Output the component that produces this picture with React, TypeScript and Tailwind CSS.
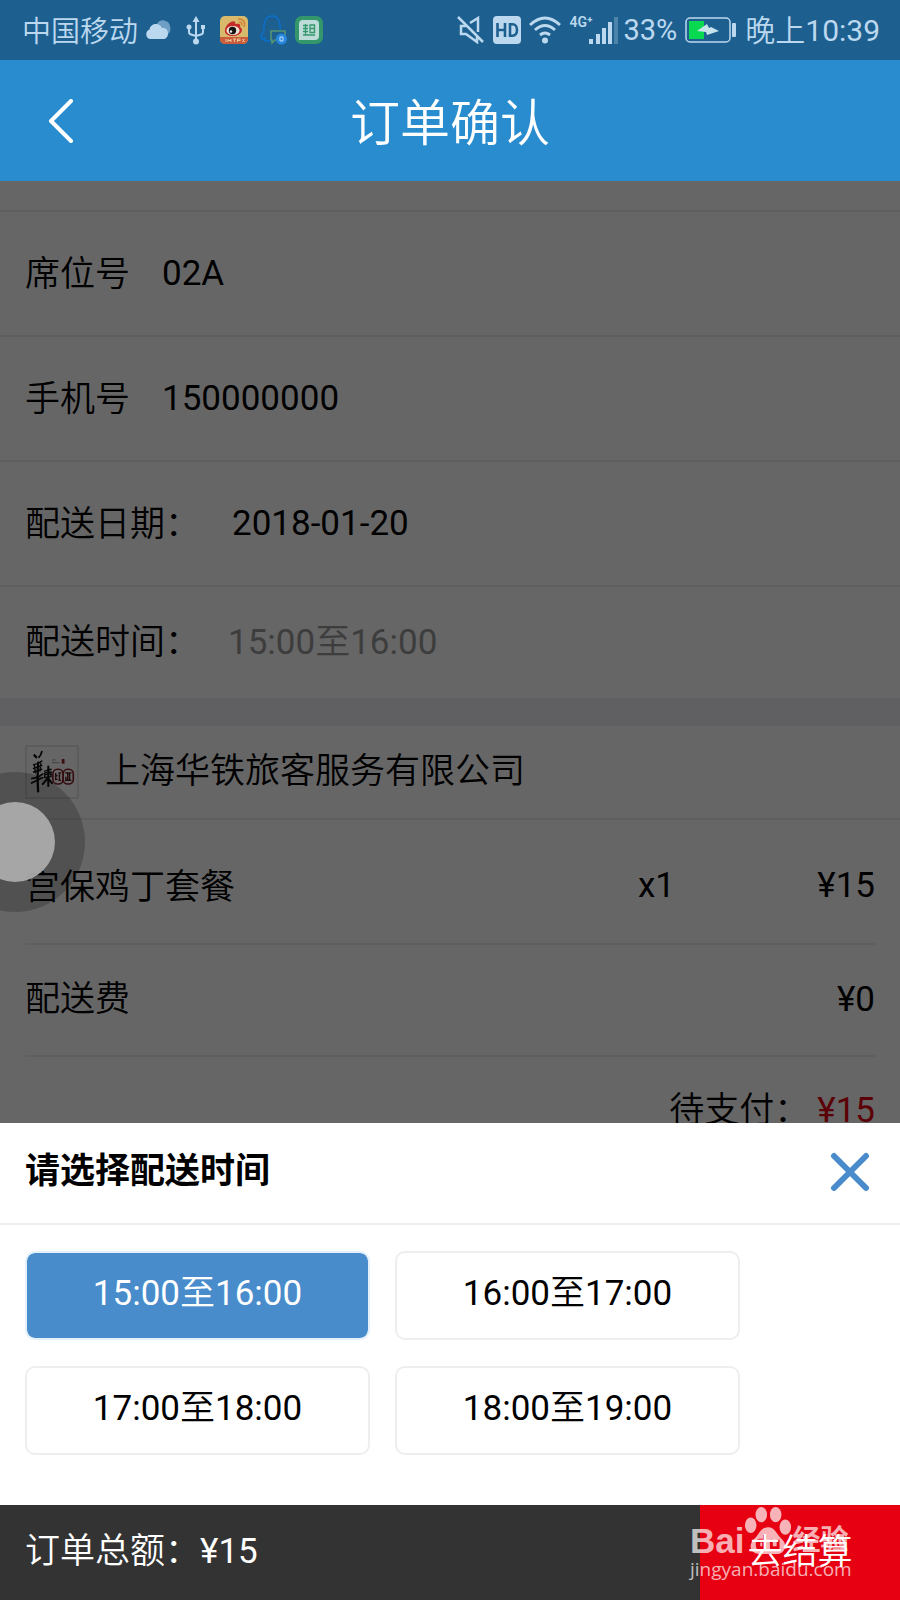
import { useState } from "react";
import type { ReactNode } from "react";

const TIMES = ["15:00至16:00", "16:00至17:00", "17:00至18:00", "18:00至19:00"];

function StatusBar() {
  return (
    <div className="flex h-[60px] shrink-0 items-center justify-between bg-[#1d6090] pl-[22px] pr-5 text-[#bcd8ef]">
      <div className="flex items-center">
        <span className="pt-1 text-[29px] font-[350] leading-10">中国移动</span>
        <svg className="ml-[7px] h-5 w-[26px]" viewBox="0 0 26 20" aria-hidden="true">
          <path d="M12 4a7 7 0 0 1 13 2c1 4 0 7-2 8L12 6Z" fill="#6f9fc4" />
          <path d="M5 19a5 5 0 0 1-.5-9.500C5.500 3 14.500 2 17 8c4-.5 6 2 6 5.500S21 19 18 19Z" fill="#bcd8ef" />
        </svg>
        <svg className="ml-[15px] h-[29px] w-5" viewBox="0 0 20 29" fill="none" stroke="currentColor" strokeWidth="2" aria-hidden="true">
          <path d="M10 5v19M3 12v4q0 2 2 2.500l5 1.500M17 12v4q0 2-2 2.500l-5 1.500" />
          <path d="m10 0 3.500 6h-7ZM15 9h4v4h-4Z" fill="currentColor" stroke="none" />
          <circle cx="3" cy="11" r="2.500" fill="currentColor" stroke="none" />
          <circle cx="10" cy="25.500" r="3" fill="currentColor" stroke="none" />
        </svg>
        <svg className="ml-[14px] size-7" viewBox="0 0 28 28" aria-hidden="true">
          <rect width="28" height="28" rx="5" fill="#d9b96c" />
          <path d="M0 21h28v2a5 5 0 0 1-5 5H5a5 5 0 0 1-5-5Z" fill="#cc5b3c" />
          <path d="M6 23v3m2 0v-3m0 1.500h3m0-1.500v3m2-3h3m-1.500 0v3m3-3v3m0-3h3m-3 1.500h3m2-1.500 2 3m0-3-2 3" fill="none" stroke="#e8c99a" strokeWidth="1" />
          <path d="M5 14C5 9 13 3 15 6c.8 1-.2 2 .5 2 5-1 5 1 4.500 3 4 2 2 8-6 9C9 20.500 4 18 5 14Z" fill="#c52d2b" />
          <ellipse cx="13" cy="14.500" rx="6.500" ry="4.500" fill="#eee5d7" />
          <circle cx="12.500" cy="14.500" r="3.700" fill="#151313" />
          <circle cx="11" cy="15.500" r="1.200" fill="#eee" />
          <path d="M18 3c5-.5 8 3 6 8M19 6c2 0 3.500 1 2.700 3.500" fill="none" stroke="#cf8336" strokeWidth="1.500" />
        </svg>
        <svg className="ml-3 h-[30px] w-[27px]" viewBox="0 0 27 30" fill="none" aria-hidden="true">
          <path d="M12 26H6c-2 0-2-1.500-1-3-2-1-2 1-3 1-2-1 0-6 2-8C3 7 6 1 12 1s9 6 8 14" stroke="#0b70ca" strokeWidth="1.500" />
          <path d="M11 16h14v9H15l-3 3v-3h-1Z" stroke="#589473" strokeWidth="1.500" />
          <circle cx="21.500" cy="24" r="5.500" fill="#2685dc" />
          <path d="M20 22h3v4h-3Z" stroke="#c1e2fa" />
        </svg>
        <svg className="ml-2 size-7" viewBox="0 0 28 28" aria-hidden="true">
          <rect width="28" height="28" rx="7" fill="#33976b" />
          <path d="M8 4h12a4 4 0 0 1 4 4v12a4 4 0 0 1-4 4H4V8a4 4 0 0 1 4-4Z" fill="#bddbd8" />
          <path d="M8 9.500h5M8 12.500h5M8 15.500h5M8 19h12M10.500 8v11M15 9h4.500v7.500H15ZM15 12.500h4.500" fill="none" stroke="#33976b" strokeWidth="1.300" />
        </svg>
      </div>
      <div className="flex items-center">
        <svg className="h-7 w-[28px]" viewBox="0 0 28 28" fill="none" stroke="currentColor" strokeWidth="2.500" aria-hidden="true">
          <path d="m1 1 25 25M9 10H4v8h5l11 8v-5M13 7l8-5v14" />
        </svg>
        <svg className="ml-2 h-7 w-[28px]" viewBox="0 0 28 28" aria-hidden="true">
          <rect width="28" height="28" rx="4" fill="currentColor" />
          <path d="M4.500 7v14M12 7v14M4 14h8M17 8.300h2.500c6 0 6 11.400 0 11.400H17Z" fill="none" stroke="#1d6090" strokeWidth="2.600" />
        </svg>
        <svg className="ml-2 h-7 w-[32px]" viewBox="0 0 32 28" fill="none" stroke="currentColor" strokeWidth="3" aria-hidden="true">
          <path d="M1 9q15-14 30 0M6 14q10-9 20 0M11 19q5-4 10 0" />
          <circle cx="16" cy="24.500" r="3" fill="currentColor" stroke="none" />
        </svg>
        <div className="ml-2 flex h-[28px]">
          <span className="w-5 text-[14px] font-semibold leading-3">4G⁺</span>
          <svg className="h-[28px] w-[30px]" viewBox="0 0 30 28" fill="currentColor" aria-hidden="true">
            <path d="M0 23h4v5H0ZM7 18h4v10H7ZM13 12h4v16h-4ZM19 6h4v22h-4Z" />
            <path d="M25 1h4v27h-4Z" opacity=".3" />
          </svg>
        </div>
        <span className="ml-1 text-[29px] leading-10">33%</span>
        <svg className="ml-2 h-[26px] w-[52px]" viewBox="0 0 52 26" aria-hidden="true">
          <rect x="1" y="1" width="44" height="24" rx="4" fill="none" stroke="currentColor" strokeWidth="1.500" />
          <path d="M4 4h15v18H4Z" fill="#09d950" />
          <path d="m12 14 10-7 2 4 2-1 8 4-12 4-1-3Z" fill="#c7e4ed" />
          <rect x="47" y="6" width="4" height="14" rx="1" fill="currentColor" />
        </svg>
        <span className="ml-2 pt-[2px] text-[30px] font-[350] leading-10">晚上<span className="font-normal">10:39</span></span>
      </div>
    </div>
  );
}

function Row({ label, children }: { label: string; children: ReactNode }) {
  return (
    <div className="flex h-[125px] items-center gap-8 border-b-2 border-[#eeeeee] px-[25px]">
      <dt className="pt-[2px] font-[350]">{label}</dt>
      <dd>{children}</dd>
    </div>
  );
}

function StoreLogo() {
  return (
    <svg className="size-[54px] shrink-0 border-2 border-[#e6e6e6]" viewBox="0 0 54 54" fill="none" aria-hidden="true">
      <g stroke="#111" strokeLinecap="round">
        <path d="m8 9 2 2" strokeWidth="2.500" />
        <path d="M16 5q-1 4-3 6" strokeWidth="2" />
        <path d="M7 19q6-1 9-4M8 20l1 8m6-10-1 8m-7-3 9-3m-9 7 9-3" strokeWidth="1.500" />
        <path d="M5 34q8-1 12-5M5 39l12-6" strokeWidth="1.800" />
        <path d="M12 17q-1 14 0 31" strokeWidth="2.500" />
        <path d="m19 26 7-2m-7 4v5m0-5 7-1v5l-7 1m0-3 7-1" strokeWidth="1.500" />
        <path d="M23 21v21m-1-8-5 6m6-6 4 5" strokeWidth="2.200" />
      </g>
      <path d="M27 14h4m-4 3h8" stroke="#999" />
      <path d="M39 13v5" stroke="#8d2525" strokeWidth="3" />
      <g stroke="#852129" strokeWidth="1.800">
        <rect x="28" y="24" width="11" height="16" rx="5" />
        <rect x="39" y="24" width="11" height="16" rx="5" />
        <path d="M31 28v8m0-5h2m-2 4h2m2-7v8m-1-8h3m-3 8h3" stroke="#541419" strokeWidth="1.500" />
        <path d="M41 28h7m-4 0v8m-2-4v4m4-8v8m-5 0h7" stroke="#541419" strokeWidth="1.500" />
      </g>
    </svg>
  );
}

function OrderDetails() {
  return (
    <main className="relative min-h-0 flex-1 overflow-hidden bg-white">
      <div className="h-[31px] border-b-2 border-[#eeeeee]" />
      <dl>
        <Row label="席位号">02A</Row>
        <Row label="手机号">150000000</Row>
        <Row label="配送日期：">2018-01-20</Row>
        <div className="flex h-[111px] items-center gap-7 px-[25px]">
          <dt className="font-[350]">配送时间：</dt>
          <dd className="text-[#999999]">15:00<span className="font-[350]">至</span>16:00</dd>
        </div>
      </dl>
      <div className="h-7 bg-[#efeff4]" />
      <section>
        <div className="flex h-[94px] items-center gap-[26px] border-b-2 border-[#eeeeee] px-[25px]">
          <StoreLogo />
          <h2 className="font-[350]">上海华铁旅客服务有限公司</h2>
        </div>
        <div className="px-[25px]">
          <div className="flex h-[125px] items-center border-b-2 border-[#eeeeee] pt-2">
            <span className="flex-1 pt-1 font-[350]">宫保鸡丁套餐</span>
            <span>x1</span>
            <span className="w-[200px] text-right">¥15</span>
          </div>
          <div className="flex h-[112px] items-center justify-between border-b-2 border-[#eeeeee]">
            <span className="font-[350]">配送费</span>
            <span>¥0</span>
          </div>
          <div className="flex h-[108px] items-center justify-end">
            <span className="font-[350]">待支付：</span>
            <span className="ml-2 text-[#e60012]">¥15</span>
          </div>
        </div>
      </section>
      <div className="absolute inset-0 bg-black/60" />
      <button
        type="button"
        aria-label="悬浮按钮"
        className="absolute -left-[55px] top-[591px] flex size-[140px] items-center justify-center rounded-full bg-black/20"
      >
        <span className="size-20 rounded-full bg-[#ababab]/95" />
      </button>
    </main>
  );
}

function TimeSheet() {
  const [selected, setSelected] = useState(TIMES[0]);
  return (
    <section className="shrink-0 bg-white" aria-labelledby="sheet-title">
      <div className="flex h-[102px] items-center justify-between border-b-2 border-[#eeeeee] pb-[2px] pl-[25px] pr-[30px]">
        <h2 id="sheet-title" className="font-bold">请选择配送时间</h2>
        <button type="button" aria-label="关闭">
          <svg className="size-10" viewBox="0 0 40 40" fill="none" stroke="#4a8ccb" strokeWidth="6" strokeLinecap="round" aria-hidden="true">
            <path d="m4 4 32 32M36 4 4 36" />
          </svg>
        </button>
      </div>
      <div className="grid w-full max-w-[740px] grid-cols-2 gap-x-[25px] gap-y-[26px] pb-[50px] pl-[25px] pt-[26px]">
        {TIMES.map((time) => (
          <button
            key={time}
            type="button"
            aria-pressed={selected === time}
            onClick={() => setSelected(time)}
            className={`h-[89px] rounded-[10px] border-2 pb-1 ${
              selected === time ? "border-[#e4f1fa] bg-[#488ccb] bg-clip-padding text-white" : "border-[#eeeeee] bg-white text-black"
            }`}
          >
            {time.slice(0, 5)}<span className="font-[350]">至</span>{time.slice(6)}
          </button>
        ))}
      </div>
    </section>
  );
}

function Watermark() {
  return (
    <div className="pointer-events-none absolute -left-[10px] top-0 w-[170px] text-white/70">
      <div className="flex items-end">
        <span className="font-['Liberation_Sans'] text-[35px] font-bold leading-8">Bai</span>
        <svg className="h-[52px] w-[48px]" viewBox="0 0 50 50" fill="currentColor" aria-hidden="true">
          <ellipse cx="7" cy="19" rx="6" ry="8" />
          <ellipse cx="18" cy="8" rx="6" ry="8" />
          <ellipse cx="33" cy="8" rx="6" ry="8" />
          <ellipse cx="43" cy="21" rx="6" ry="8" />
          <path
            fillRule="evenodd"
            d="M25 21c8 0 9 8 15 13 6 6 2 15-6 15H16c-9 0-12-9-6-15 6-5 7-13 15-13ZM20 33h-4c-5 0-5 12 0 12h7V29h-3ZM19 37v4h-2v-4ZM27 34v8q0 3 3 3h7V34h-3v7h-4v-7Z"
          />
        </svg>
        <span className="text-[28px] font-bold leading-8">经验</span>
      </div>
      <div className="font-['Open_Sans'] text-[19px] leading-6">jingyan.baidu.com</div>
    </div>
  );
}

export default function App() {
  return (
    <div className="flex h-screen flex-col overflow-hidden bg-white font-[Roboto,'Noto_Sans_CJK_SC',sans-serif] text-[35px] leading-[50px] text-black">
      <StatusBar />
      <header className="grid h-[121px] shrink-0 grid-cols-[1fr_auto_1fr] items-center bg-[#298ccf] px-12 text-white">
        <button type="button" aria-label="返回" className="w-[26px]">
          <svg className="h-[44px] w-[26px]" viewBox="0 0 26 44" fill="none" stroke="currentColor" strokeWidth="4" strokeLinecap="round" strokeLinejoin="round" aria-hidden="true">
            <path d="M23 2 3 22l20 20" />
          </svg>
        </button>
        <h1 className="pt-[6px] text-[50px] font-[350] leading-[60px]">订单确认</h1>
      </header>
      <OrderDetails />
      <TimeSheet />
      <footer className="flex h-[95px] shrink-0 bg-[#333333] text-white">
        <p className="flex flex-1 items-center pb-[2px] pl-[25px] font-[350]">
          订单总额：<span className="font-normal">¥15</span>
        </p>
        <div className="relative w-[200px]">
          <button type="button" className="size-full bg-[#e60012] font-[350]">去结算</button>
          <Watermark />
        </div>
      </footer>
    </div>
  );
}
